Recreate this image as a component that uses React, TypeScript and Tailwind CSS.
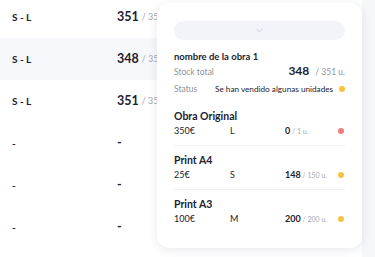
import { ChevronDown } from "lucide-react";

const rows = [
  { size: "S - L", stock: "351", total: "/ 351 u.", active: false },
  { size: "S - L", stock: "348", total: "/ 351 u.", active: true },
  { size: "S - L", stock: "351", total: "/ 351 u.", active: false },
  { size: "-", stock: "-", total: "", active: false },
  { size: "-", stock: "-", total: "", active: false },
  { size: "-", stock: "-", total: "", active: false },
];

const variants = [
  { name: "Obra Original", price: "350€", size: "L", stock: "0", total: "1 u.", dot: "bg-[#ee7b7d]" },
  { name: "Print A4", price: "25€", size: "S", stock: "148", total: "150 u.", dot: "bg-[#f6c244]" },
  { name: "Print A3", price: "100€", size: "M", stock: "200", total: "200 u.", dot: "bg-[#f6c244]" },
];

function App() {
  return (
    <div
      className="relative w-[375px] h-[257px] overflow-hidden bg-white text-[#1d2230]"
      style={{ fontFamily: "Lato, 'Open Sans', sans-serif" }}
    >
      <div className="flex h-full">
        <div className="flex-1 -mt-[4px]">
          {rows.map((row, i) => (
            <div
              key={i}
              className={`flex items-center h-[42px] ${row.active ? "bg-[#f6f8fc]" : ""}`}
            >
              <span className="w-[117px] pl-[12px] text-[10px] font-bold">{row.size}</span>
              <span className="text-[12.5px] font-bold">{row.stock}</span>
              {row.total && (
                <span className="ml-[3px] text-[9px] text-[#a4a8b2]">{row.total}</span>
              )}
            </div>
          ))}
        </div>
        <div className="w-[13px] bg-[#f6f7f9]" />
      </div>

      {/* detail popover */}
      <div className="absolute left-[157px] top-[3px] w-[205px] h-[245px] rounded-[12px] bg-white shadow-[0_2px_10px_rgba(30,40,70,0.10)] px-[17px] pt-[18px]">
        <button
          type="button"
          className="flex items-center justify-center w-full h-[19px] rounded-full bg-[#f2f4fa]"
        >
          <ChevronDown size={11} strokeWidth={1.5} className="text-[#b9bdc8]" />
        </button>

        <div className="mt-[10px] text-[9.5px] font-bold leading-[14px]">nombre de la obra 1</div>
        <div className="flex items-center justify-between text-[8.5px] text-[#8e939e] leading-[14px]">
          <span>Stock total</span>
          <span className="flex items-baseline">
            <span className="text-[12px] font-bold text-[#1d2230] mr-[6px]">348</span>
            <span>/ 351 u.</span>
          </span>
        </div>
        <div className="flex items-center mt-[3px] text-[8.5px] leading-[14px] whitespace-nowrap">
          <span className="w-[41px] text-[#8e939e]">Status</span>
          <span className="flex-1 text-[8.2px] text-[#1d2230]">Se han vendido algunas unidades</span>
          <span className="w-[6px] h-[6px] ml-[3px] rounded-full bg-[#f6c244]" />
        </div>

        <div className="mt-[6px]">
          {variants.map((v, i) => (
            <div
              key={v.name}
              className={`pt-[6px] pb-[7px] ${i < variants.length - 1 ? "border-b border-[#eef0f4]" : ""}`}
            >
              <div className="text-[10.5px] font-bold leading-[16px]">{v.name}</div>
              <div className="flex items-center text-[9px] leading-[14px]">
                <span className="w-[56px]">{v.price}</span>
                <span className="w-[55px]">{v.size}</span>
                <span className="flex-1">
                  <span className="font-bold">{v.stock}</span>
                  <span className="text-[7px] text-[#a4a8b2]"> / {v.total}</span>
                </span>
                <span className={`w-[6px] h-[6px] rounded-full mr-[1px] ${v.dot}`} />
              </div>
            </div>
          ))}
        </div>
      </div>
    </div>
  );
}

export default App;
